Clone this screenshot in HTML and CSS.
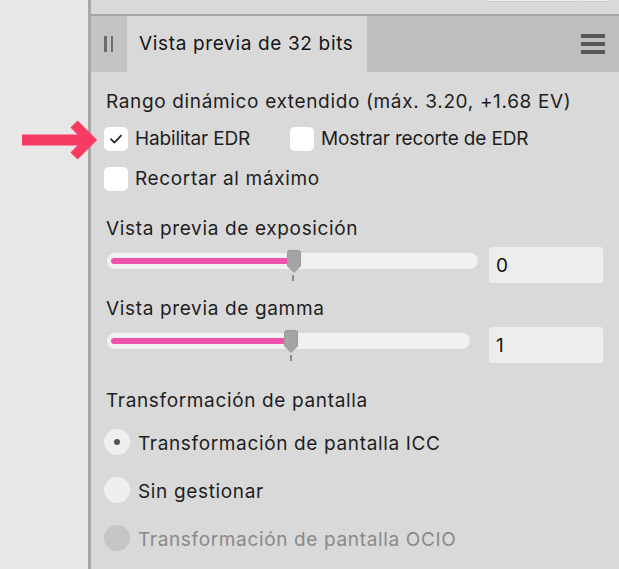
FILE: index.html
```html
<!DOCTYPE html>
<html lang="es">
<head>
<meta charset="utf-8">
<title>Vista previa de 32 bits</title>
<link rel="stylesheet" href="styles.css">
</head>
<body>
<div class="app">
  <div class="side"></div>
  <div class="divider"></div>
  <div class="panel">
    <div class="topstrip">
      <span class="stub stub-wide"></span>
      <span class="stub stub-narrow"></span>
    </div>
    <div class="tabbar">
      <div class="grip"><span></span><span></span></div>
      <div class="tab">Vista previa de 32 bits</div>
      <div class="menu"><span></span><span></span><span></span></div>
    </div>
    <div class="content">
      <div class="heading">Rango dinámico extendido (máx. 3.20, +1.68 EV)</div>
      <div class="check-row first">
        <label class="check">
          <span class="box">
            <svg viewBox="0 0 24 24" width="24" height="24"><path d="M7 12.2 L10.4 15.6 L17 8.6" fill="none" stroke="#222" stroke-width="1.7" stroke-linecap="round" stroke-linejoin="round"/></svg>
          </span>
          <span>Habilitar EDR</span>
        </label>
        <label class="check">
          <span class="box"></span>
          <span>Mostrar recorte de EDR</span>
        </label>
      </div>
      <div class="check-row second">
        <label class="check">
          <span class="box"></span>
          <span>Recortar al máximo</span>
        </label>
      </div>

      <div class="heading label-exposure">Vista previa de exposición</div>
      <div class="slider-row">
        <div class="track track-exposure">
          <div class="fill" style="width:181px"></div>
          <svg class="thumb" style="left:180px" viewBox="0 0 14 23" width="14" height="23"><path d="M2.5 0.5 H11.5 Q13.5 0.5 13.5 2.5 V16 L7 22.5 L0.5 16 V2.5 Q0.5 0.5 2.5 0.5 Z" fill="#a4a4a4" stroke="#999" stroke-width="1"/></svg>
          <span class="tick" style="left:185px"></span>
        </div>
        <div class="value">0</div>
      </div>

      <div class="heading label-gamma">Vista previa de gamma</div>
      <div class="slider-row">
        <div class="track track-gamma">
          <div class="fill" style="width:177px"></div>
          <svg class="thumb" style="left:177px" viewBox="0 0 14 23" width="14" height="23"><path d="M2.5 0.5 H11.5 Q13.5 0.5 13.5 2.5 V16 L7 22.5 L0.5 16 V2.5 Q0.5 0.5 2.5 0.5 Z" fill="#a4a4a4" stroke="#999" stroke-width="1"/></svg>
          <span class="tick" style="left:183px"></span>
        </div>
        <div class="value">1</div>
      </div>

      <div class="heading label-transform">Transformación de pantalla</div>
      <div class="radio-row r1">
        <span class="radio on"></span>
        <span class="radio-label">Transformación de pantalla ICC</span>
      </div>
      <div class="radio-row r2">
        <span class="radio"></span>
        <span class="radio-label">Sin gestionar</span>
      </div>
      <div class="radio-row r3 disabled">
        <span class="radio"></span>
        <span class="radio-label">Transformación de pantalla OCIO</span>
      </div>
    </div>
  </div>
  <svg class="arrow" viewBox="0 0 80 42" width="80" height="42">
    <line x1="0" y1="21" x2="64" y2="21" stroke="#f73b63" stroke-width="11"/>
    <polyline points="52,5 68,21 52,37" fill="none" stroke="#f73b63" stroke-width="10" stroke-linejoin="miter" stroke-miterlimit="4"/>
  </svg>
</div>
</body>
</html>
```

FILE: styles.css
```css
* { box-sizing: border-box; }

html, body {
  margin: 0;
  padding: 0;
}

body {
  width: 619px;
  height: 569px;
  overflow: hidden;
  background: #e7e7e7;
  font-family: "Inter", "Liberation Sans", sans-serif;
}

.app {
  position: relative;
  display: flex;
  height: 569px;
}

.side {
  width: 88px;
  background: #e7e7e7;
}

.divider {
  width: 3px;
  background: #a8a8a8;
}

.panel {
  flex: 1;
  display: flex;
  flex-direction: column;
  background: #d9d9d9;
}

.topstrip {
  height: 16px;
  display: flex;
  justify-content: flex-end;
  align-items: flex-start;
  gap: 3px;
  padding-right: 11px;
  border-bottom: 2px solid #a6a6a6;
  background: #d9d9d9;
}

.stub {
  height: 2px;
  background: #efefef;
  border-bottom: 1px solid #c9c9c9;
}

.stub-wide { width: 90px; }
.stub-narrow { width: 27px; }

.tabbar {
  height: 56px;
  display: flex;
  align-items: stretch;
  background: #bebebe;
}

.grip {
  width: 36px;
  display: flex;
  align-items: center;
  gap: 4px;
  padding-left: 13px;
  background: #c4c4c4;
}

.grip span {
  width: 2.5px;
  height: 16px;
  background: #6c6c6c;
}

.tab {
  width: 240px;
  padding-left: 12px;
  display: flex;
  align-items: center;
  background: #d9d9d9;
  color: #151515;
  font-size: 19px;
  line-height: 24px;
  letter-spacing: 0.65px;
  white-space: nowrap;
}

.menu {
  margin-left: auto;
  padding-right: 14px;
  display: flex;
  flex-direction: column;
  justify-content: center;
  gap: 4px;
}

.menu span {
  width: 24px;
  height: 4px;
  background: #585858;
}

.content {
  padding: 18px 16px 0 13px;
  font-size: 19px;
  line-height: 24px;
  letter-spacing: 0.65px;
  color: #1e1e1e;
  white-space: nowrap;
}

.heading {
  padding-left: 2px;
}

.check-row {
  display: grid;
  grid-template-columns: 186px auto;
  height: 24px;
}

.check-row.first {
  margin-top: 13px;
  letter-spacing: -0.15px;
}

.check-row.second {
  margin-top: 16px;
  grid-template-columns: auto;
}

.check {
  display: flex;
  align-items: center;
  gap: 7px;
}

.box {
  width: 24px;
  height: 24px;
  border-radius: 5px;
  background: #ffffff;
  display: flex;
}

.label-exposure { margin-top: 26px; }
.label-gamma { margin-top: 14px; }
.label-transform { margin-top: 26px; }

.slider-row {
  display: flex;
  align-items: flex-start;
  margin-top: 6px;
}

.track {
  position: relative;
  margin-left: 3px;
  margin-top: 6px;
  height: 16px;
  border-radius: 8px;
  background: #f1f1f1;
  padding: 5px 4px;
}

.track-exposure { width: 371px; }
.track-gamma { width: 363px; }

.fill {
  height: 6px;
  border-radius: 3px;
  background: #ee53ab;
}

.thumb {
  position: absolute;
  top: -3px;
}

.tick {
  position: absolute;
  top: 22px;
  width: 1.5px;
  height: 6px;
  background: #8d8d8d;
}

.value {
  margin-left: auto;
  width: 114px;
  height: 36px;
  border-radius: 3px;
  background: #ededed;
  padding: 7px 0 0 7px;
  color: #111;
}

.radio-row {
  display: flex;
  align-items: center;
  gap: 8px;
  height: 26px;
}

.r1 { margin-top: 16px; }
.r2, .r3 { margin-top: 22px; }

.radio {
  width: 26px;
  height: 26px;
  border-radius: 50%;
  background: #efefef;
  display: flex;
  align-items: center;
  justify-content: center;
}

.radio.on::after {
  content: "";
  width: 6px;
  height: 6px;
  border-radius: 50%;
  background: #555;
}

.radio-label {
  padding-top: 3px;
}

.disabled .radio { background: #c5c5c5; }
.disabled .radio-label { color: #898989; }

.arrow {
  position: absolute;
  left: 22px;
  top: 119px;
}
```
